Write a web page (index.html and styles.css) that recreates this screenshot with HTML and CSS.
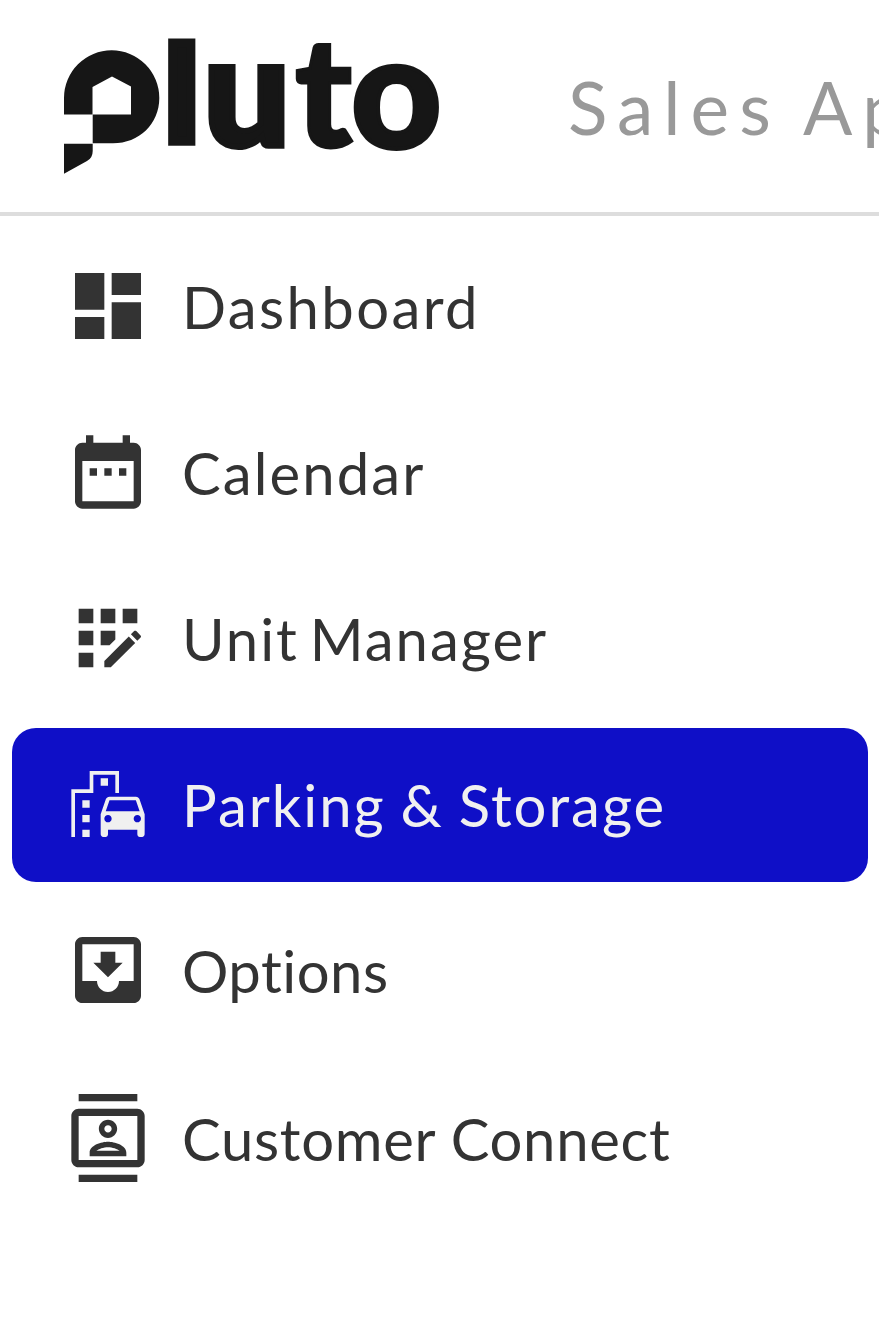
FILE: index.html
```html
<!DOCTYPE html>
<html lang="en">
<head>
    <meta charset="UTF-8">
    <meta name="viewport" content="width=device-width, initial-scale=1.0">
    <title>Pluto Sales App</title>
    <link rel="stylesheet" href="styles.css">
</head>
<body>

<!-- Header -->
<header class="header">
    <svg class="logo" viewBox="0 0 384 144" role="img" aria-label="pluto">
        <path d="M0 82.500V66A47.650 47.650 0 0 1 95.300 66C95.300 92 75 111.300 49 111.300H28.700V82.500H67V54.500L48 44.500L28.500 55V82.500Z"/>
        <path d="M0 111.700H28.700V119Q28.700 126 23 129L0 141.800Z"/>
        <text class="logo-text" y="115"><tspan class="logo-l" x="101" y="108.500">l</tspan><tspan class="logo-u" x="139.500" y="113.500">u</tspan><tspan class="logo-t" x="231" y="114.500">t</tspan><tspan class="logo-o" x="287" y="116">o</tspan></text>
    </svg>
    <span class="app-name">Sales App</span>
</header>

<!-- Side menu -->
<nav class="menu">
    <a class="menu-item">
        <svg class="icon" viewBox="0 0 24 24"><path d="M3 13h8V3H3zM3 21h8v-6H3zM13 21h8V11h-8zM13 3v6h8V3z"/></svg>
        <span class="label dashboard">Dashboard</span>
    </a>
    <a class="menu-item">
        <svg class="icon" viewBox="0 0 24 24"><path d="M7 11h2v2H7zM11 11h2v2h-2zM15 11h2v2h-2zM19 4h-1V2h-2v2H8V2H6v2H5C3.890 4 3 4.900 3 6v14c0 1.100.890 2 2 2h14c1.100 0 2-.900 2-2V6c0-1.100-.900-2-2-2zm0 16H5V9h14z"/></svg>
        <span class="label calendar">Calendar</span>
    </a>
    <a class="menu-item">
        <svg class="icon" viewBox="0 0 24 24"><path d="M10 4h4v4h-4zM4 16h4v4H4zM4 10h4v4H4zM4 4h4v4H4zM16 4h4v4h-4zM14 12.420V10h-4v4h2.420zM20.880 11.290l-1.170-1.170c-.160-.160-.420-.160-.580 0l-.880.880L20 12.750l.880-.880c.160-.160.160-.420 0-.580zM11 18.250V20h1.750l6.670-6.670-1.750-1.750z"/></svg>
        <span class="label unit">Unit Manager</span>
    </a>
    <a class="menu-item active">
        <svg class="icon" viewBox="0 0 24 24"><path d="M20.570 10.660C20.430 10.260 20.050 10 19.600 10h-7.190c-.460 0-.830.260-.980.660L10 14.770l.010 5.510c0 .380.310.720.690.720h.620c.380 0 .680-.380.680-.760V19h8v1.240c0 .380.310.760.690.760h.610c.380 0 .690-.340.690-.720l.010-1.370v-4.140zM12.410 11h7.190l1.030 3h-9.250zM12 17c-.550 0-1-.450-1-1s.450-1 1-1 1 .450 1 1-.450 1-1 1zM20 17c-.550 0-1-.450-1-1s.450-1 1-1 1 .450 1 1-.450 1-1 1zM14 9h1V3H7v5H2v13h1V9h5V4h6zM5 11h2v2H5zM10 5h2v2h-2zM5 15h2v2H5zM5 19h2v2H5z"/></svg>
        <span class="label parking">Parking &amp; Storage</span>
    </a>
    <a class="menu-item">
        <svg class="icon" viewBox="0 0 24 24"><path d="M16 10h-2V7h-4v3H8l4 4zM19 3H5c-1.100 0-2 .900-2 2v14c0 1.100.900 2 2 2h14c1.100 0 2-.900 2-2V5c0-1.100-.900-2-2-2zm0 12h-4c0 1.660-1.350 3-3 3s-3-1.340-3-3H5V5h14z"/></svg>
        <span class="label options">Options</span>
    </a>
    <a class="menu-item last">
        <svg class="icon" viewBox="0 0 24 24"><path d="M20 4H4c-1.100 0-2 .900-2 2v12c0 1.100.900 2 2 2h16c1.100 0 2-.900 2-2V6c0-1.100-.900-2-2-2zm0 14H4V6h16zM4 0h16v2H4zM4 22h16v2H4zM12 12c1.380 0 2.500-1.120 2.500-2.500S13.380 7 12 7 9.500 8.120 9.500 9.500 10.620 12 12 12zm0-3.500c.550 0 1 .450 1 1s-.450 1-1 1-1-.450-1-1 .450-1 1-1zM17 15.990C17 13.900 13.690 13 12 13s-5 .900-5 2.990V17h10zM8.810 15.500c.610-.520 2.030-1 3.190-1 1.170 0 2.590.480 3.200 1z"/></svg>
        <span class="label customer">Customer Connect</span>
    </a>
</nav>

</body>
</html>
```

FILE: styles.css
```css
* { box-sizing: border-box; }

body {
    margin: 0;
    background: #fff;
    color: #333;
    font-family: Lato, sans-serif;
    overflow-x: hidden;
}

/* Header */
.header {
    display: flex;
    align-items: flex-start;
    height: 216px;
    padding: 32px 0 0 64px;
    border-bottom: 4px solid #ddd;
}
.logo {
    flex: none;
    width: 384px;
    height: 144px;
    fill: #161616;
    overflow: visible;
}
.logo-text {
    font-size: 152px;
    font-weight: 900;
    stroke: #161616;
}
.logo-l {
    font-size: 132px;
    stroke-width: 9px;
}
.logo-u {
    font-size: 153px;
    stroke-width: 6px;
}
.logo-t { stroke-width: 3px; }
.logo-o {
    font-size: 157px;
    stroke-width: 4px;
}
.app-name {
    margin: 31px 0 0 120px;
    color: #999;
    font-size: 73px;
    line-height: 88px;
    letter-spacing: 10px;
    word-spacing: -4px;
    white-space: nowrap;
}

/* Side menu */
.menu {
    display: flex;
    flex-direction: column;
    gap: 12px;
    padding: 14px 11px 0 12px;
}
.menu-item {
    display: flex;
    align-items: center;
    gap: 30px;
    height: 154px;
    padding: 0 52px 2px;
    border-radius: 24px;
}
.menu-item.active {
    background: #0f0fc7;
    color: #f0f0f0;
}
.menu-item.last { margin-top: 2px; }

.icon {
    flex: none;
    width: 88px;
    height: 88px;
    fill: currentColor;
}
.label {
    padding-top: 1px;
    font-size: 58px;
    line-height: 72px;
    white-space: nowrap;
}

/* Label tracking */
.dashboard { letter-spacing: 2.4px; }
.calendar { letter-spacing: 2.1px; }
.unit {
    letter-spacing: 2px;
    word-spacing: -6px;
}
.parking {
    letter-spacing: 2px;
    word-spacing: -2px;
}
.options { letter-spacing: 0.5px; }
.customer { letter-spacing: 0.7px; }
```
